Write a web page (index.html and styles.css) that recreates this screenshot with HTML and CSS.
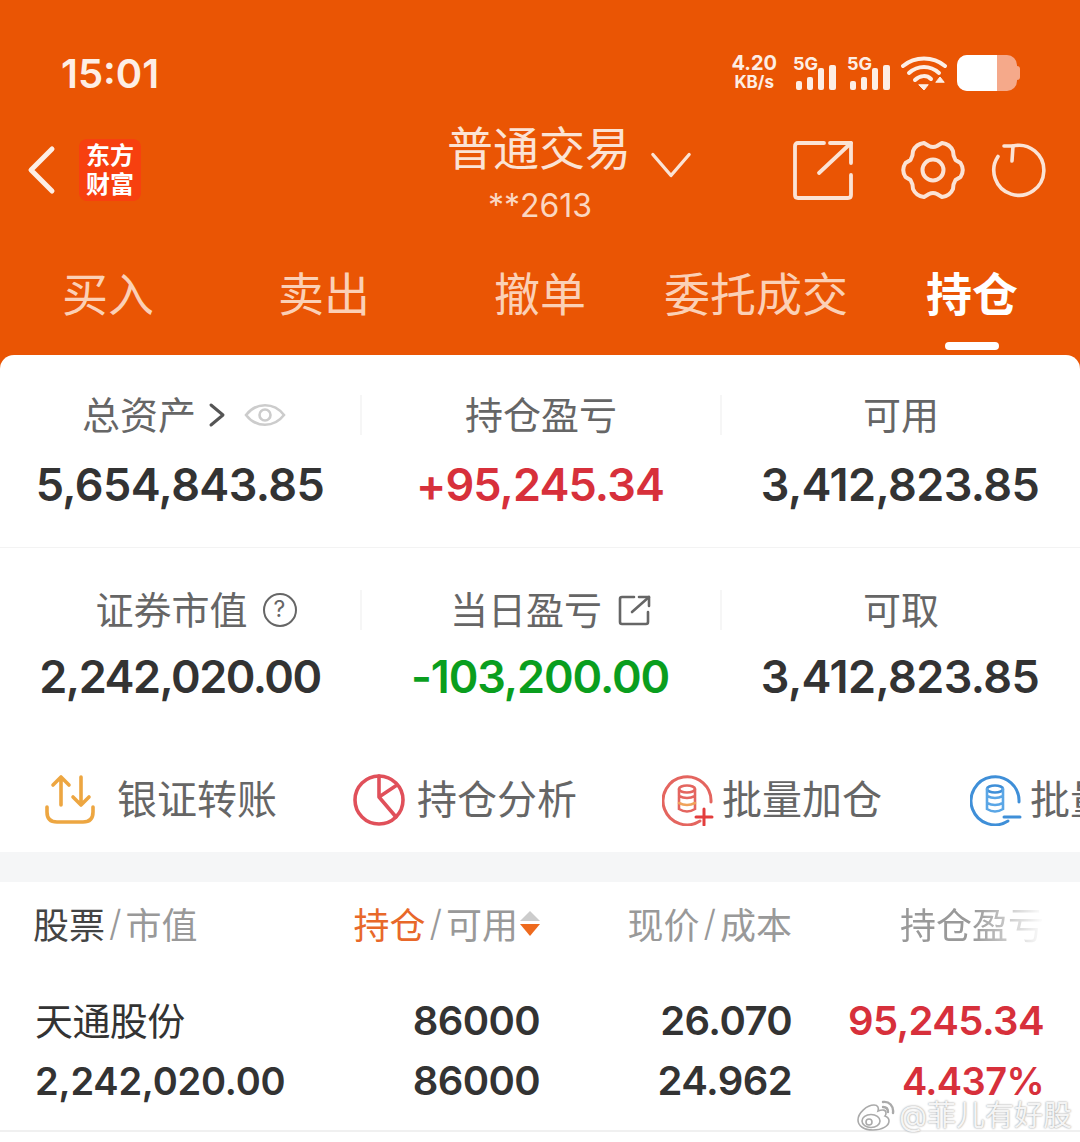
FILE: index.html
```html
<!DOCTYPE html>
<html lang="zh-CN">
<head>
    <meta charset="UTF-8">
    <meta name="viewport" content="width=device-width, initial-scale=1.0">
    <title>普通交易</title>
    <link rel="stylesheet" href="styles.css">
</head>
<body>
    <div class="page">
        <header class="top">
            <div class="status">
                <span class="time">15:01</span>
                <div class="status-icons">
                    <div class="speed"><b>4.20</b><span>KB/s</span></div>
                    <svg class="signal" width="44" height="36" viewBox="0 0 44 36">
                        <text x="0" y="15" class="sig-text">5G</text>
                        <rect x="3" y="26" width="6" height="9" rx="2"/>
                        <rect x="14" y="22" width="6" height="13" rx="2"/>
                        <rect x="25" y="13" width="6" height="22" rx="2"/>
                        <rect x="36" y="10" width="7" height="25" rx="2"/>
                    </svg>
                    <svg class="signal" width="44" height="36" viewBox="0 0 44 36">
                        <text x="0" y="15" class="sig-text">5G</text>
                        <rect x="3" y="26" width="6" height="9" rx="2"/>
                        <rect x="14" y="22" width="6" height="13" rx="2"/>
                        <rect x="25" y="13" width="6" height="22" rx="2"/>
                        <rect x="36" y="10" width="7" height="25" rx="2"/>
                    </svg>
                    <svg class="wifi" width="46" height="36" viewBox="0 0 46 36" fill="none" stroke="#fdeee5" stroke-width="4" stroke-linecap="round">
                        <path d="M2 11C14 1 32 1 44 11"/>
                        <path d="M8 18C17 10 29 10 38 18"/>
                        <path d="M14 25C19 20 26 20 30 24"/>
                        <path d="M18 30L23 35L27 30Z" fill="#fdeee5" stroke-width="1"/>
                        <path d="M35 27L39 22L43 27Z" fill="#fdeee5" stroke-width="1"/>
                    </svg>
                    <div class="battery"><div class="battery-fill"></div></div>
                </div>
            </div>

            <nav class="nav">
                <div class="nav-left">
                    <svg width="32" height="50" viewBox="0 0 32 50" fill="none" stroke="#fdeee5" stroke-width="5" stroke-linecap="round" stroke-linejoin="round">
                        <path d="M26 4L5 25L26 46"/>
                    </svg>
                    <div class="logo">东方<br>财富</div>
                </div>
                <div class="nav-center">
                    <div class="nav-title">
                        <span>普通交易</span>
                        <svg width="44" height="28" viewBox="0 0 44 28" fill="none" stroke="#fbe3d5" stroke-width="3.5" stroke-linecap="round" stroke-linejoin="round">
                            <path d="M3 3L22 25L41 3"/>
                        </svg>
                    </div>
                    <div class="nav-sub">**2613</div>
                </div>
                <div class="nav-right">
                    <svg width="62" height="62" viewBox="0 0 62 62" fill="none" stroke="#fbe3d5" stroke-width="3.8" stroke-linecap="round" stroke-linejoin="round">
                        <path d="M32 4H6Q3 4 3 7V56Q3 59 6 59H56Q59 59 59 56V36"/>
                        <path d="M27 34L59 4"/>
                        <path d="M38 4H59V24"/>
                    </svg>
                    <svg class="gear" width="64" height="64" viewBox="0 0 64 64" fill="none" stroke="#fbe3d5" stroke-width="4" stroke-linejoin="round">
                        <path d="M59.5 25Q64 32 59.5 39L54.5 42Q52 46 52 51Q49 58 41 59L36 56Q32 54 28 56L23 59Q15 58 12 51Q12 46 9.5 42L4.5 39Q0 32 4.5 25L9.5 22Q12 18 12 13Q15 6 23 5L28 8Q32 10 36 8L41 5Q49 6 52 13Q52 18 54.5 22Z"/>
                        <circle cx="32" cy="32" r="10.5"/>
                    </svg>
                    <svg class="refresh" width="58" height="58" viewBox="0 0 58 58" fill="none" stroke="#fbe3d5" stroke-width="3.6" stroke-linecap="round" stroke-linejoin="round">
                        <path d="M23 5A25 25 0 1 1 8 15.5"/>
                        <path d="M14 5H23L22 20"/>
                    </svg>
                </div>
            </nav>

            <div class="tabs">
                <div class="tab">买入</div>
                <div class="tab">卖出</div>
                <div class="tab">撤单</div>
                <div class="tab">委托成交</div>
                <div class="tab active">持仓</div>
            </div>
        </header>

        <main class="card">
            <section class="summary first">
                <div class="cell">
                    <div class="label label-assets"><span>总资产</span>
                        <svg width="18" height="26" viewBox="0 0 18 26" fill="none" stroke="#555" stroke-width="3" stroke-linecap="round" stroke-linejoin="round"><path d="M3 3L15 13L3 23"/></svg>
                        <svg class="eye" width="42" height="24" viewBox="0 0 42 24" fill="none" stroke="#ccc" stroke-width="2.6"><path d="M2 12C12 -1 30 -1 40 12C30 25 12 25 2 12Z"/><circle cx="21" cy="12" r="5.5"/></svg>
                    </div>
                    <div class="value">5,654,843.85</div>
                </div>
                <div class="cell">
                    <div class="label">持仓盈亏</div>
                    <div class="value up">+95,245.34</div>
                </div>
                <div class="cell">
                    <div class="label">可用</div>
                    <div class="value">3,412,823.85</div>
                </div>
            </section>
            <section class="summary second">
                <div class="cell">
                    <div class="label label-market"><span>证券市值</span>
                        <span class="help">?</span>
                    </div>
                    <div class="value tight">2,242,020.00</div>
                </div>
                <div class="cell">
                    <div class="label label-today"><span>当日盈亏</span>
                        <svg width="34" height="32" viewBox="0 0 34 32" fill="none" stroke="#666" stroke-width="2.6" stroke-linecap="round" stroke-linejoin="round"><path d="M16 3H4Q2 3 2 5V28Q2 30 4 30H28Q30 30 30 28V18"/><path d="M14 18L31 3"/><path d="M21 3H31V12"/></svg>
                    </div>
                    <div class="value down tight">-103,200.00</div>
                </div>
                <div class="cell">
                    <div class="label">可取</div>
                    <div class="value">3,412,823.85</div>
                </div>
            </section>

            <section class="actions">
                <div class="action action-transfer">
                    <svg width="52" height="52" viewBox="0 0 52 52" fill="none" stroke="#eda641" stroke-width="3.6" stroke-linecap="round" stroke-linejoin="round">
                        <path d="M17 31V3M9 11L17 3L25 11"/>
                        <path d="M37 3V31M29 23L37 31L45 23"/>
                        <path d="M3 33V38Q3 48 13 48H39Q49 48 49 38V33"/>
                    </svg>
                    <span>银证转账</span>
                </div>
                <div class="action action-pie">
                    <svg width="52" height="52" viewBox="0 0 52 52" fill="none" stroke="#e0505a" stroke-width="3.6" stroke-linecap="round" stroke-linejoin="round">
                        <circle cx="26" cy="26" r="24"/>
                        <path d="M26 2V23L44 11M26 23L43 43"/>
                    </svg>
                    <span>持仓分析</span>
                </div>
                <div class="action action-add">
                    <svg width="52" height="52" viewBox="0 0 52 52" fill="none" stroke-linecap="round">
                        <path d="M38 47A24 24 0 1 1 49 28" stroke="#e4655f" stroke-width="3"/>
                        <ellipse cx="25" cy="15" rx="8" ry="3.5" stroke="#e4655f" stroke-width="2.6"/>
                        <path d="M17 15V35Q25 40 33 35V15M17 22Q25 26 33 22" stroke="#e4655f" stroke-width="2.6"/>
                        <path d="M17 29Q25 33 33 29" stroke="#efa25a" stroke-width="2.6"/>
                        <path d="M42 35V51M34 43H50" stroke="#e33d3d" stroke-width="3"/>
                    </svg>
                    <span>批量加仓</span>
                </div>
                <div class="action action-minus">
                    <svg width="52" height="52" viewBox="0 0 52 52" fill="none" stroke-linecap="round">
                        <path d="M38 47A24 24 0 1 1 49 28" stroke="#3f8fd8" stroke-width="3"/>
                        <ellipse cx="25" cy="15" rx="8" ry="3.5" stroke="#3f8fd8" stroke-width="2.6"/>
                        <path d="M17 15V35Q25 40 33 35V15M17 22Q25 26 33 22M17 29Q25 33 33 29" stroke="#5aa6e6" stroke-width="2.6"/>
                        <path d="M34 43H50" stroke="#3f8fd8" stroke-width="3"/>
                    </svg>
                    <span>批量减仓</span>
                </div>
            </section>

            <div class="band"></div>

            <section class="table">
                <div class="thead">
                    <div class="th th-left"><strong>股票</strong><i>/</i>市值</div>
                    <div class="th"><em>持仓</em><i>/</i>可用<span class="sort"><span class="sort-up"></span><span class="sort-down"></span></span></div>
                    <div class="th">现价<i>/</i>成本</div>
                    <div class="th th-fade">持仓盈亏</div>
                </div>
                <div class="trow">
                    <div class="td name">天通股份</div>
                    <div class="td">86000</div>
                    <div class="td">26.070</div>
                    <div class="td up">95,245.34</div>
                    <div class="td mv">2,242,020.00</div>
                    <div class="td">86000</div>
                    <div class="td">24.962</div>
                    <div class="td up rate">4.437%</div>
                </div>
            </section>
        </main>

        <div class="watermark">
            <svg width="40" height="32" viewBox="0 0 40 32" fill="#fff" stroke="#aaa" stroke-width="1.6">
                <path d="M17 30C8 30 2 26 2 20C2 13 11 5 18 5C22 5 23 8 22 11C27 9 30 10 30 13C30 14 30 15 29 16C32 17 33 19 33 21C33 26 26 30 17 30Z"/>
                <ellipse cx="15" cy="21" rx="9" ry="6.5"/>
                <circle cx="13" cy="22" r="3"/>
                <path d="M27 7C30 7 32 9 32 12M27 2C33 1 38 6 37 13" fill="none" stroke-linecap="round" stroke-width="2.4"/>
            </svg>
            <span>@菲儿有好股</span>
        </div>
    </div>
</body>
</html>
```

FILE: styles.css
```css
* {
    box-sizing: border-box;
}
html, body {
    margin: 0;
    padding: 0;
}
body {
    font-family: Inter, "Noto Sans CJK SC", sans-serif;
    background: #ea5504;
}
.page {
    position: relative;
    width: 1080px;
    height: 1142px;
    overflow: hidden;
    background: #ea5504;
    display: flex;
    flex-direction: column;
}

/* orange header */
.top {
    height: 355px;
    flex: none;
    color: #fbe3d5;
}
.status {
    height: 110px;
    padding: 36px 60px 0 61px;
    display: flex;
    justify-content: space-between;
    align-items: center;
}
.time {
    font-size: 40px;
    font-weight: 600;
    color: #fdeee5;
}
.status-icons {
    display: flex;
    align-items: center;
    gap: 10px;
    height: 40px;
}
.speed {
    display: flex;
    flex-direction: column;
    align-items: center;
    line-height: 19px;
    font-size: 17px;
    font-weight: 700;
    color: #fdeee5;
    margin-right: 6px;
}
.speed b {
    font-size: 20px;
    font-weight: 700;
}
.signal {
    fill: #fdeee5;
    overflow: visible;
}
.sig-text {
    font-family: Inter, sans-serif;
    font-size: 18px;
    font-weight: 700;
}
.battery {
    position: relative;
    width: 60px;
    height: 36px;
    margin-right: 3px;
    border-radius: 10px;
    background: #f5a98a;
}
.battery::after {
    content: "";
    position: absolute;
    right: -3px;
    top: 11px;
    width: 3px;
    height: 14px;
    border-radius: 0 3px 3px 0;
    background: #f5a98a;
}
.battery-fill {
    width: 40px;
    height: 100%;
    border-radius: 10px 0 0 10px;
    background: #fff;
}

.nav {
    height: 125px;
    padding-top: 10px;
    display: grid;
    grid-template-columns: 447px 245px 1fr;
    align-items: start;
}
.nav-left {
    height: 100px;
    padding-left: 26px;
    display: flex;
    align-items: center;
    gap: 21px;
}
.logo {
    width: 62px;
    height: 62px;
    border-radius: 8px;
    background: #f7400f;
    color: #fff;
    font-size: 24px;
    font-weight: 700;
    line-height: 29px;
    text-align: center;
    padding-top: 2px;
}
.nav-center {
    margin-top: -2px;
}
.nav-title {
    display: flex;
    align-items: center;
    gap: 19px;
    height: 60px;
    font-size: 46px;
    line-height: 60px;
    white-space: nowrap;
}
.nav-title svg {
    margin-top: 34px;
}
.nav-sub {
    width: 186px;
    margin-top: 8px;
    text-align: center;
    font-size: 32px;
    line-height: 40px;
    color: #fbd7c1;
}
.nav-right {
    height: 100px;
    padding-right: 32px;
    display: flex;
    justify-content: flex-end;
    align-items: center;
}
.gear {
    margin-left: 47px;
}
.refresh {
    margin-left: 25px;
}

.tabs {
    height: 120px;
    padding-top: 29px;
    display: grid;
    grid-template-columns: repeat(5, 216px);
}
.tab {
    position: relative;
    height: 91px;
    text-align: center;
    font-size: 46px;
    line-height: 60px;
    color: #fbd0b6;
    white-space: nowrap;
}
.tab.active {
    color: #fff;
    font-weight: 700;
}
.tab.active::after {
    content: "";
    position: absolute;
    left: 81px;
    bottom: 5px;
    width: 54px;
    height: 8px;
    border-radius: 4px;
    background: #fff;
}

/* white sheet */
.card {
    flex: 1;
    background: #fff;
    border-radius: 14px 14px 0 0;
}
.summary {
    display: grid;
    grid-template-columns: repeat(3, 1fr);
    padding: 40px 0 32px;
    border-bottom: 1px solid #f3f3f3;
}
.summary.second {
    padding: 42px 0 41px;
    border-bottom: 0;
}
.summary.second .label {
    margin-bottom: 17px;
}
.cell {
    text-align: center;
}
.label {
    height: 40px;
    margin-bottom: 20px;
    display: flex;
    align-items: center;
    justify-content: center;
    gap: 13px;
    font-size: 38px;
    line-height: 40px;
    color: #666;
}
.cell + .cell .label {
    border-left: 2px solid #f6f6f6;
}
.label-assets {
    padding-left: 8px;
    gap: 12px;
}
.label-assets .eye {
    margin-left: 6px;
}
.label-market {
    padding-left: 32px;
    gap: 15px;
}
.label-today {
    padding-left: 20px;
    gap: 16px;
}
.value {
    font-size: 45px;
    font-weight: 600;
    line-height: 60px;
    letter-spacing: -0.6px;
    color: #333;
}
.value.tight {
    letter-spacing: -1.5px;
}
.up {
    color: #d7303b;
}
.value.down {
    color: #0a9e1e;
    letter-spacing: -1.1px;
}
.value.up {
    color: #d7303b;
    letter-spacing: -0.9px;
}
.help {
    width: 34px;
    height: 34px;
    border: 2.6px solid #666;
    border-radius: 50%;
    font-size: 23px;
    line-height: 28px;
    text-align: center;
}

.actions {
    height: 104px;
    padding-left: 44px;
    display: flex;
    align-items: center;
    overflow: hidden;
    white-space: nowrap;
}
.action {
    display: flex;
    align-items: center;
    flex: none;
    font-size: 40px;
    color: #666;
}
.action span {
    padding-bottom: 6px;
}
.action-transfer {
    width: 309px;
    gap: 21px;
}
.action-pie {
    width: 309px;
    gap: 12px;
}
.action-add {
    width: 308px;
    gap: 8px;
}
.action-minus {
    gap: 8px;
}

.band {
    height: 30px;
    background: #f5f6f7;
}

.table {
    padding: 0 36px 0 35px;
    height: 250px;
    border-bottom: 2px solid #f0f0f0;
}
.thead,
.trow {
    display: grid;
    grid-template-columns: 305px 200px 252px 252px;
}
.thead {
    height: 88px;
    padding-bottom: 6px;
    align-items: center;
}
.th {
    font-size: 36px;
    color: #999;
    display: flex;
    justify-content: flex-end;
    align-items: center;
    white-space: nowrap;
}
.th i {
    margin: 0 4px;
    font-style: normal;
    font-weight: 300;
}
.th em {
    font-style: normal;
    color: #e8682a;
}
.th-left {
    justify-content: flex-start;
    margin-left: -2px;
}
.th-left strong {
    font-weight: 400;
    color: #444;
}
.th-fade {
    -webkit-mask-image: linear-gradient(to right, #000 72%, transparent 100%);
    mask-image: linear-gradient(to right, #000 72%, transparent 100%);
}
.sort {
    display: flex;
    flex-direction: column;
    gap: 3px;
    margin-left: 2px;
}
.sort-up,
.sort-down {
    width: 0;
    height: 0;
    border-left: 10px solid transparent;
    border-right: 10px solid transparent;
}
.sort-up {
    border-bottom: 10px solid #ccc;
}
.sort-down {
    border-top: 12px solid #ee6a1e;
}
.trow {
    padding-top: 21px;
    grid-auto-rows: 60px;
    line-height: 60px;
}
.td {
    text-align: right;
    font-size: 40px;
    font-weight: 600;
    letter-spacing: -0.6px;
    color: #333;
}
.td.up {
    color: #d7303b;
}
.td.rate {
    font-size: 38px;
}
.name {
    text-align: left;
    font-size: 38px;
    font-weight: 400;
}
.mv {
    text-align: left;
    font-size: 38px;
    letter-spacing: -0.2px;
    white-space: nowrap;
}

/* watermark sits on top of the shot */
.watermark {
    position: absolute;
    left: 856px;
    top: 1099px;
    display: flex;
    align-items: center;
    gap: 3px;
    font-size: 29px;
    line-height: 34px;
    color: #f4f4f4;
    text-shadow: 0 0 2px #888;
}
```
